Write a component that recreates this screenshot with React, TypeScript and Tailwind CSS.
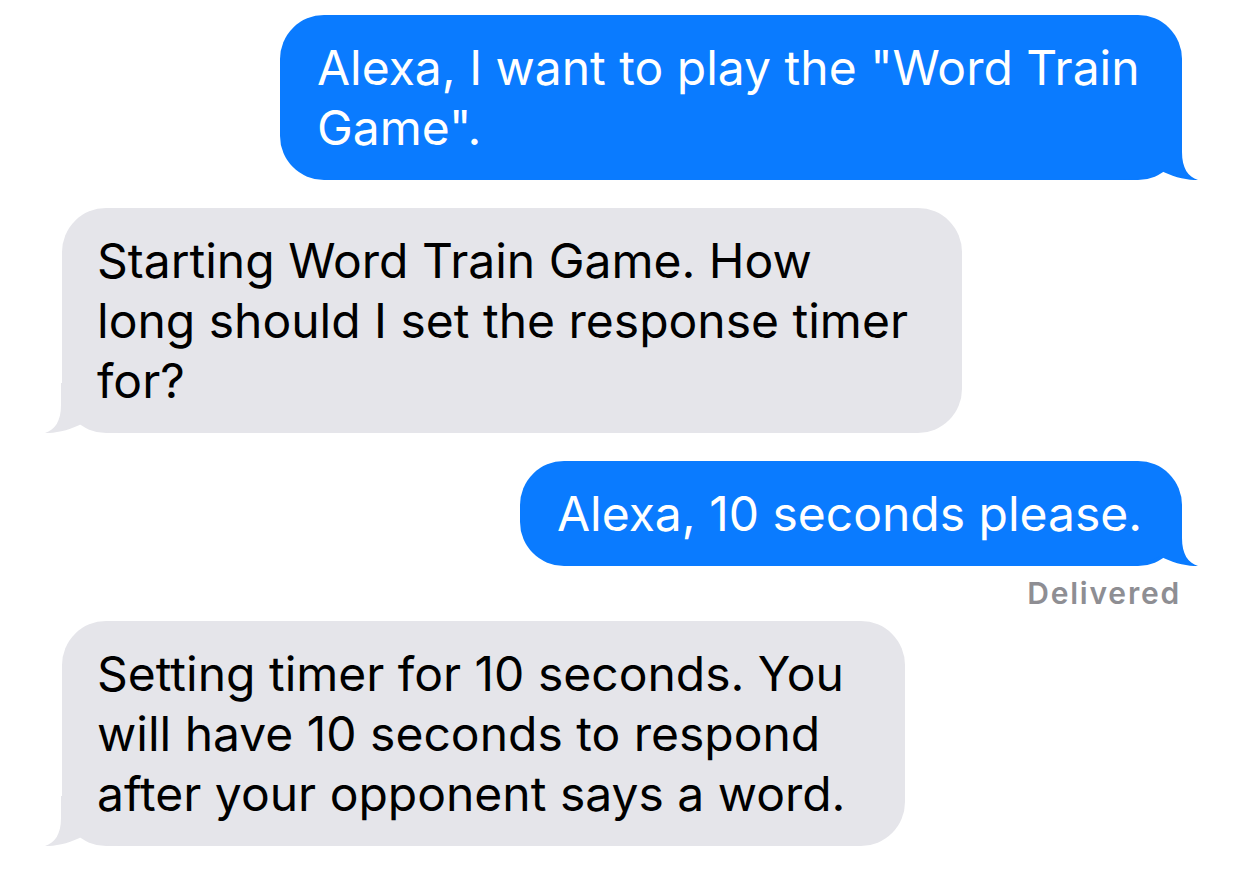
const font = { fontFamily: '"Inter", "Liberation Sans", sans-serif' };

function Tail({ side, color }: { side: "left" | "right"; color: string }) {
  // tail drawn for right side; mirrored for left
  return (
    <svg
      width="80"
      height="50"
      viewBox="0 0 80 50"
      className={
        side === "right"
          ? "absolute bottom-0 -right-[16px]"
          : "absolute bottom-0 -left-[17px] -scale-x-100"
      }
    >
      <path
        d="M0,0 L64,0 L64,22 C64,38 70,47 80,50 C70,50.5 54,47 42,40 C32,46 20,50 0,50 Z"
        fill={color}
      />
    </svg>
  );
}

function Sent({ width, children }: { width: string; children: React.ReactNode }) {
  return (
    <div className="flex justify-end">
      <div className={`relative ${width} rounded-[44px] bg-[#0a7bff] pl-[37px] py-[22.5px] text-white text-[48px] leading-[60px] whitespace-nowrap`}>
        <span className="relative z-10">{children}</span>
        <Tail side="right" color="#0a7bff" />
      </div>
    </div>
  );
}

function Received({ width, children }: { width: string; children: React.ReactNode }) {
  return (
    <div className="flex justify-start">
      <div className={`relative ${width} rounded-[44px] bg-[#e5e5ea] pl-[35px] py-[22.5px] text-black text-[48px] leading-[60px] whitespace-nowrap`}>
        <span className="relative z-10">{children}</span>
        <Tail side="left" color="#e5e5ea" />
      </div>
    </div>
  );
}

export default function App() {
  return (
    <div className="w-[1242px] h-[871px] bg-white overflow-hidden pl-[62px] pr-[60px] pt-[15px]" style={font}>
      <Sent width="w-[902px]">
        Alexa, I want to play the "Word Train
        <br />
        Game".
      </Sent>
      <div className="mt-[28px]">
        <Received width="w-[900px]">
          Starting Word Train Game. How
          <br />
          long should I set the response timer
          <br />
          for?
        </Received>
      </div>
      <div className="mt-[28px]">
        <Sent width="w-[662px]">Alexa, 10 seconds please.</Sent>
      </div>
      <div className="mt-[12px] text-right text-[30px] leading-[30px] font-semibold tracking-[1.8px] text-[#8e8e93] pr-[1px]">
        Delivered
      </div>
      <div className="mt-[13px]">
        <Received width="w-[843px]">
          Setting timer for 10 seconds. You
          <br />
          will have 10 seconds to respond
          <br />
          after your opponent says a word.
        </Received>
      </div>
    </div>
  );
}
